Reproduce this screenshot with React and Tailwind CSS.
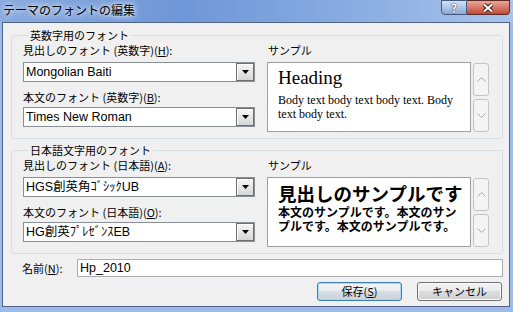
import React from 'react';

const jp = "font-['Noto_Sans_CJK_JP',sans-serif]";
const ui = "font-['Liberation_Sans','Noto_Sans_CJK_JP',sans-serif]";

const Combo = ({ value }) => (
  <div className="flex h-[20px] w-[232px] border border-[#8a8f96] bg-white">
    <div className={`flex-1 pl-[2px] text-[12.5px] leading-[18px] text-black ${ui}`}>{value}</div>
    <div className="flex h-[18px] w-[18px] items-center justify-center border border-[#6f6f6f] bg-gradient-to-b from-[#f6f6f6] to-[#d6d6d6] shadow-[inset_1px_1px_0_#ffffff]">
      <svg width="7" height="4" viewBox="0 0 7 4">
        <path d="M0 0H7L3.5 4Z" fill="#000" />
      </svg>
    </div>
  </div>
);

const ScrollBtn = ({ up, h }) => (
  <div className={`flex w-[16px] items-center justify-center rounded-[3px] border border-[#c4c4c4] bg-[#f4f4f4] ${h}`}>
    <svg width="9" height="5" viewBox="0 0 9 5">
      <path d={up ? 'M0.5 4.5L4.5 0.5L8.5 4.5' : 'M0.5 0.5L4.5 4.5L8.5 0.5'} fill="none" stroke="#a8a8a8" strokeWidth="1" />
    </svg>
  </div>
);

const Group = ({ legend, label1, key1, label2, key2, combo1, combo2, children, className }) => (
  <fieldset className={`ml-[8px] w-[492px] rounded-[3px] border border-[#d5dfe5] pb-[6px] pl-[11px] pr-[13px] ${className}`}>
    <legend className="ml-[5px] px-[2px] text-[11px] leading-[13px] text-black">{legend}</legend>
    <div className="flex gap-[12px] pt-[2px]">
      <div className="flex w-[232px] flex-col">
        <div className="text-[11px] leading-[13px]">
          {label1}(<span className="underline">{key1}</span>):
        </div>
        <div className="mt-[5px]">
          <Combo value={combo1} />
        </div>
        <div className="mt-[9px] text-[11px] leading-[13px]">
          {label2}(<span className="underline">{key2}</span>):
        </div>
        <div className="mt-[3px]">
          <Combo value={combo2} />
        </div>
      </div>
      <div className="flex flex-col">
        <div className="pl-[1px] text-[11px] leading-[13px]">サンプル</div>
        <div className="mt-[5px] flex gap-[2px]">
          <div className="h-[70px] w-[204px] overflow-hidden border border-[#a0a0a0] bg-white px-[10px]">
            {children}
          </div>
          <div className="flex flex-col gap-[3px] pt-[1px]">
            <ScrollBtn up h="h-[33px]" />
            <ScrollBtn h="h-[33px]" />
          </div>
        </div>
      </div>
    </div>
  </fieldset>
);

export default function App() {
  return (
    <div className={`flex h-[312px] w-[513px] flex-col overflow-hidden bg-[#9dbbe7] ${jp}`}>
      {/* title bar */}
      <div className="flex h-[22px] items-start justify-between bg-[linear-gradient(90deg,#8aabdf_0%,#6f96d7_35%,#86a9e0_65%,#a9c4eb_100%)]">
        <div className="pl-[3px] pt-[3px] text-[12px] leading-[14px] text-black [text-shadow:0_0_4px_#ffffff,0_0_8px_#ffffff]">
          テーマのフォントの編集
        </div>
        <div className="mr-[3px] flex">
          <div className="flex h-[15px] w-[26px] items-center justify-center rounded-bl-[4px] border border-[#44597e] bg-gradient-to-b from-[#d3e0f3] to-[#8ea9d6] text-[12px] font-bold leading-none text-white [text-shadow:0_0_1px_#1c2c4c,0_0_1px_#1c2c4c]">
            ?
          </div>
          <div className="flex h-[15px] w-[43px] items-center justify-center rounded-br-[4px] border border-l-0 border-[#5b2a25] bg-gradient-to-b from-[#e7a797] to-[#c2463a]">
            <svg width="12" height="10" viewBox="0 0 12 10">
              <path d="M2 1.5L10 8.5M10 1.5L2 8.5" stroke="#3a1a16" strokeWidth="4" />
              <path d="M2 1.5L10 8.5M10 1.5L2 8.5" stroke="#ffffff" strokeWidth="2" />
            </svg>
          </div>
        </div>
      </div>

      {/* dialog body */}
      <div className="ml-[2px] h-[285px] w-[508px] border border-[#4e6385] bg-[#f0f0f0] pt-[6px] text-black">
        <Group
          legend="英数字用のフォント"
          label1="見出しのフォント (英数字)"
          key1="H"
          label2="本文のフォント (英数字)"
          key2="B"
          combo1="Mongolian Baiti"
          combo2="Times New Roman"
        >
          <div className="whitespace-nowrap pt-[4px] font-['Liberation_Serif',serif] text-[19px] leading-[22px]">Heading</div>
          <div className="mt-[4px] font-['Liberation_Serif',serif] text-[12px] leading-[14px]">
            Body text body text body text. Body text body text.
          </div>
        </Group>

        <Group
          className="mt-[5px]"
          legend="日本語文字用のフォント"
          label1="見出しのフォント (日本語)"
          key1="A"
          label2="本文のフォント (日本語)"
          key2="O"
          combo1="HGS創英角ｺﾞｼｯｸUB"
          combo2="HG創英ﾌﾟﾚｾﾞﾝｽEB"
        >
          <div className="whitespace-nowrap pt-[5px] text-[18.5px] font-bold leading-[20px]">見出しのサンプルです</div>
          <div className="mt-[2px] text-[12px] font-bold leading-[14px]">
            本文のサンプルです。本文のサンプルです。本文のサンプルです。
          </div>
        </Group>

        <div className="mt-[5px] flex items-center pl-[19px] pr-[6px]">
          <div className="w-[55px] text-[11px] leading-[13px]">
            名前(<span className="underline">N</span>):
          </div>
          <div className={`h-[18px] flex-1 border border-[#abadb3] bg-white pl-[2px] text-[12.5px] leading-[16px] ${ui}`}>
            Hp_2010
          </div>
        </div>

        <div className="mt-[5px] flex justify-end gap-[15px] pr-[7px]">
          <button className="h-[19px] w-[85px] rounded-[3px] border border-[#3c7fb1] bg-[linear-gradient(180deg,#f2f4f6_0%,#e9ecef_50%,#d9dee3_50%,#cbd2d9_100%)] text-[11px] leading-[17px] shadow-[inset_0_0_0_1px_#a6d9f5]">
            保存(<span className="underline">S</span>)
          </button>
          <button className="h-[19px] w-[85px] rounded-[3px] border border-[#707070] bg-[linear-gradient(180deg,#f2f2f2_0%,#ebebeb_50%,#dddddd_50%,#cfcfcf_100%)] text-[11px] leading-[17px] shadow-[inset_0_0_0_1px_#fcfcfc]">
            キャンセル
          </button>
        </div>
      </div>
    </div>
  );
}
